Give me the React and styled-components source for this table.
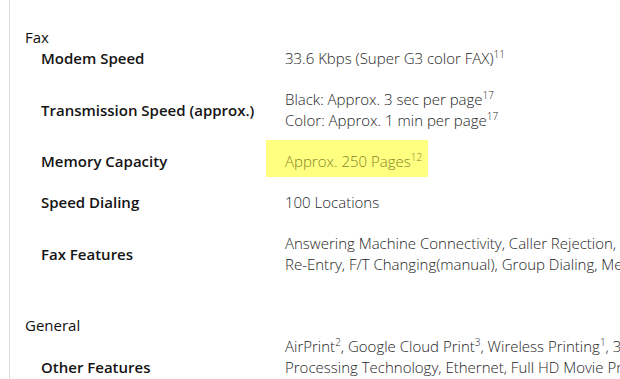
import React from "react";
import styled, { createGlobalStyle } from "styled-components";

const GlobalStyle = createGlobalStyle`
  html, body {
    margin: 0;
    padding: 0;
    background: #ffffff;
    overflow: hidden;
  }
  body {
    font-family: "Open Sans", "Noto Sans", sans-serif;
  }
`;

const specs = [
  {
    title: "Fax",
    rows: [
      { label: "Modem Speed", lines: [["33.6 Kbps (Super G3 color FAX)", "11"]] },
      {
        label: "Transmission Speed (approx.)",
        lines: [
          ["Black: Approx. 3 sec per page", "17"],
          ["Color: Approx. 1 min per page", "17"],
        ],
      },
      { label: "Memory Capacity", lines: [["Approx. 250 Pages", "12"]], marked: true },
      { label: "Speed Dialing", lines: [["100 Locations"]] },
      {
        label: "Fax Features",
        lines: [
          ["Answering Machine Connectivity, Caller Rejection, Coded Dial, Dial Tone Detection, Document Memory Backup"],
          ["Re-Entry, F/T Changing(manual), Group Dialing, Memory Reception, Remote Reception, Activity Report"],
        ],
      },
    ],
  },
  {
    title: "General",
    rows: [
      {
        label: "Other Features",
        lines: [
          ["AirPrint", "2", ", Google Cloud Print", "3", ", Wireless Printing", "1", ", 3.0\" LCD, Auto Power On"],
          ["Processing Technology, Ethernet, Full HD Movie Print, Quiet Mode, My Image Garden"],
          ["Auto Duplex Printing, Document Printing Features", "12", ", Borderless Printing"],
        ],
      },
    ],
  },
];

export default function App() {
  return (
    <>
      <GlobalStyle />
      <Page>
        <Panel>
          {specs.map((section) => (
            <Section key={section.title}>
              <SectionTitle>{section.title}</SectionTitle>
              {section.rows.map((row) => (
                <Row key={row.label}>
                  <Label>{row.label}</Label>
                  <Value $marked={row.marked}>
                    {row.lines.map((parts, i) => (
                      <Line key={i}>
                        {parts.map((p, j) =>
                          j % 2 === 1 ? <Note key={j}>{p}</Note> : <span key={j}>{p}</span>
                        )}
                      </Line>
                    ))}
                  </Value>
                </Row>
              ))}
            </Section>
          ))}
        </Panel>
      </Page>
    </>
  );
}

const Page = styled.div`
  width: 620px;
  height: 379px;
  padding-left: 9px;
  box-sizing: border-box;
  overflow: hidden;
`;

const Panel = styled.div`
  border-left: 1px solid #dadada;
  min-height: 379px;
  box-sizing: border-box;
  padding: 27px 0 0 15px;
`;

const Section = styled.section`
  margin-bottom: 20px;
`;

const SectionTitle = styled.div`
  font-size: 15px;
  line-height: 21px;
  color: #111111;
`;

const Row = styled.div`
  display: grid;
  grid-template-columns: 244px max-content;
  align-items: center;
  padding: 0 0 20px 16px;
`;

const Label = styled.div`
  font-size: 15px;
  font-weight: 550;
  line-height: 21px;
  color: #141414;
  white-space: nowrap;
`;

const Value = styled.div`
  font-size: 15px;
  font-weight: 300;
  line-height: 21px;
  color: ${(p) => (p.$marked ? "#86862a" : "#1e1e1e")};
  background: ${(p) => (p.$marked ? "#ffff80" : "transparent")};
  margin: ${(p) => (p.$marked ? "-11px 0 -5px -19px" : "0")};
  padding: ${(p) => (p.$marked ? "11px 6px 5px 19px" : "0")};
  justify-self: start;
`;

const Line = styled.div`
  white-space: nowrap;
`;

const Note = styled.sup`
  font-size: 10px;
  line-height: 0;
  vertical-align: 6px;
`;
